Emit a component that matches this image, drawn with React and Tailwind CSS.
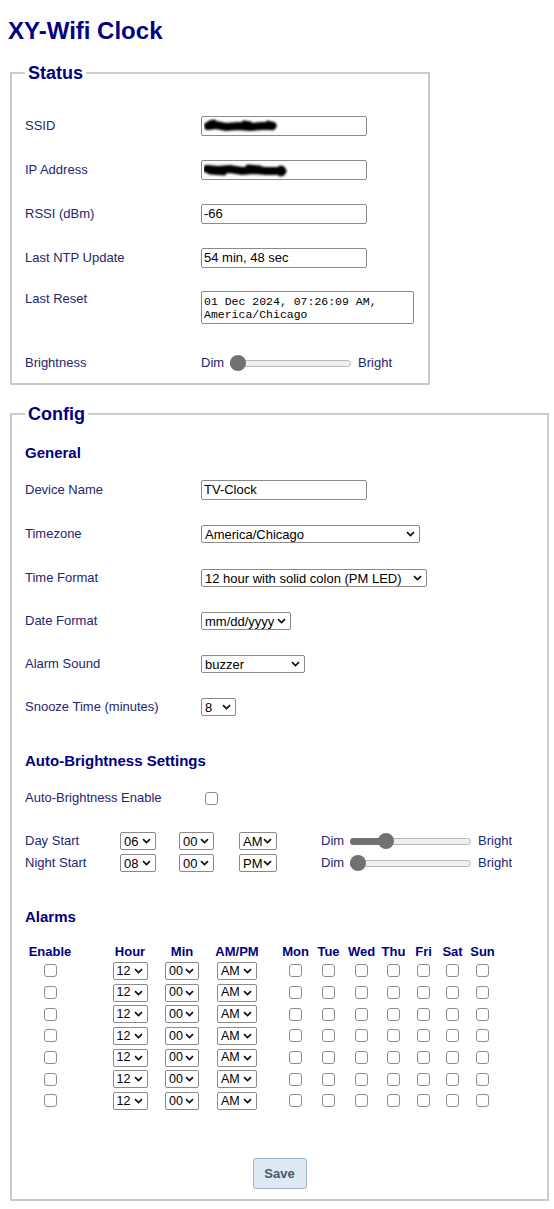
import React from "react";

const FONT = { fontFamily: '"Liberation Sans", Arial, sans-serif' };

function Chevron() {
  return (
    <svg width="9" height="6" viewBox="0 0 9 6" className="shrink-0">
      <path d="M1 1.2 L4.5 4.6 L8 1.2" fill="none" stroke="#111" strokeWidth="1.7" />
    </svg>
  );
}

function Select({ value, cls, text = "text-[13px]" }) {
  return (
    <div
      className={`flex items-center justify-between border border-[#8a8a8a] rounded-[2px] bg-white pl-[3px] pr-[4px] text-black leading-none ${cls} ${text}`}
    >
      <span className="whitespace-nowrap">{value}</span>
      <Chevron />
    </div>
  );
}

function Input({ value, cls = "w-[166px]", children }) {
  return (
    <div
      className={`flex items-center h-[20px] border border-[#8a8a8a] rounded-[2px] bg-white px-[2px] text-[13px] text-black ${cls}`}
    >
      {children || value}
    </div>
  );
}

function Check({ cls = "" }) {
  return <div className={`w-[13px] h-[13px] border border-[#8d8d8d] rounded-[3px] bg-white ${cls}`} />;
}

function Slider({ pos, cls = "w-[121px]" }) {
  const frac = pos;
  return (
    <div className={`relative h-[16px] flex items-center ${cls}`}>
      <div className="w-full h-[7px] rounded-full bg-[#efefef] border border-[#b8b8b8]" />
      <div
        className="absolute h-[7px] rounded-l-full bg-[#717171] left-0"
        style={{ width: `calc(${frac * 100}% - ${frac * 16}px + 8px)` }}
      />
      <div
        className="absolute w-[16px] h-[16px] rounded-full bg-[#717171]"
        style={{ left: `calc(${frac * 100}% - ${frac * 16}px)` }}
      />
    </div>
  );
}

function Scribble({ w, variant }) {
  return (
    <svg width={w} height="18" viewBox={`0 0 ${w} 18`} className="shrink-0">
      <defs>
        <filter id={`b${variant}`} x="-20%" y="-50%" width="140%" height="200%">
          <feGaussianBlur stdDeviation="1.1" />
        </filter>
      </defs>
      {variant === 1 ? (
        <g filter={`url(#b${variant})`} stroke="#000" strokeLinecap="round" fill="none">
          <path d="M4 9 L12 8 L22 10 L34 9 L46 10 L58 9 L66 9" strokeWidth="8" />
          <path d="M6 6 L10 5 M40 6 L46 7 M64 6 L70 8" strokeWidth="5" />
          <circle cx="68" cy="9" r="4" fill="#000" />
        </g>
      ) : (
        <g filter={`url(#b${variant})`} stroke="#000" strokeLinecap="round" fill="none">
          <path d="M3 8 L14 9 L26 8 L38 10 L50 9 L62 10 L72 10" strokeWidth="8" />
          <path d="M6 11 L20 12 M44 6 L56 7" strokeWidth="5" />
          <circle cx="77" cy="10" r="5" fill="#000" />
        </g>
      )}
    </svg>
  );
}

function Row({ label, children, cls = "" }) {
  return (
    <div className={`flex items-center h-[20px] ${cls}`}>
      <div className="w-[176px] shrink-0 text-[13px] text-[#25256f]">{label}</div>
      {children}
    </div>
  );
}

function Heading({ children, cls = "" }) {
  return <div className={`text-[15px] leading-[18px] font-bold text-[#000080] ${cls}`}>{children}</div>;
}

const cellCls = {
  enable: "w-[50px]",
  hour: "w-[44px] ml-[33px]",
  min: "w-[60px]",
  ampm: "w-[50px]",
  mon: "w-[33px] ml-[17px]",
  tue: "w-[33px]",
  wed: "w-[33px]",
  thu: "w-[31px]",
  fri: "w-[29px]",
  sat: "w-[29px]",
  sun: "w-[31px]",
};

const days = ["mon", "tue", "wed", "thu", "fri", "sat", "sun"];

function AlarmRow() {
  return (
    <div className="flex items-center h-[21.7px]">
      <div className={`${cellCls.enable} flex justify-center`}>
        <Check />
      </div>
      <div className={`${cellCls.hour} flex justify-center`}>
        <Select value="12" cls="w-[35px] h-[18px]" text="text-[12.5px]" />
      </div>
      <div className={`${cellCls.min} flex justify-center`}>
        <Select value="00" cls="w-[34px] h-[18px]" text="text-[12.5px]" />
      </div>
      <div className={`${cellCls.ampm} flex justify-center`}>
        <Select value="AM" cls="w-[40px] h-[18px]" text="text-[12.5px]" />
      </div>
      {days.map((d) => (
        <div key={d} className={`${cellCls[d]} flex justify-center`}>
          <Check />
        </div>
      ))}
    </div>
  );
}

export default function App() {
  const headers = [
    ["enable", "Enable"],
    ["hour", "Hour"],
    ["min", "Min"],
    ["ampm", "AM/PM"],
    ["mon", "Mon"],
    ["tue", "Tue"],
    ["wed", "Wed"],
    ["thu", "Thu"],
    ["fri", "Fri"],
    ["sat", "Sat"],
    ["sun", "Sun"],
  ];
  return (
    <div className="min-h-[1209px] bg-white pb-[9px]" style={FONT}>
      <h1 className="pl-[8px] pt-[17px] text-[24px] leading-[28px] font-bold text-[#000080]">XY-Wifi Clock</h1>

      <fieldset className="ml-[10px] mt-[17px] w-[420px] border-2 border-[#cbcbcb] px-[13px] pb-[10px]">
        <legend className="px-[3px] text-[18px] leading-[22px] font-bold text-[#000080]">Status</legend>
        <div className="flex flex-col pt-[32px]">
          <Row label="SSID">
            <Input>
              <Scribble w={76} variant={1} />
            </Input>
          </Row>
          <Row label="IP Address" cls="mt-[24px]">
            <Input>
              <Scribble w={86} variant={2} />
            </Input>
          </Row>
          <Row label="RSSI (dBm)" cls="mt-[24px]">
            <Input value="-66" />
          </Row>
          <Row label="Last NTP Update" cls="mt-[24px]">
            <Input value="54 min, 48 sec" />
          </Row>
          <div className="flex items-start mt-[23px]">
            <div className="w-[176px] shrink-0 text-[13px] leading-[15px] text-[#25256f]">Last Reset</div>
            <div
              className="w-[213px] h-[33px] border border-[#8a8a8a] rounded-[2px] px-[2px] pt-[3px] text-[11.5px] leading-[13px] text-black"
              style={{ fontFamily: '"Liberation Mono", "DejaVu Sans Mono", monospace' }}
            >
              01 Dec 2024, 07:26:09 AM,
              <br />
              America/Chicago
            </div>
          </div>
          <Row label="Brightness" cls="mt-[29px]">
            <span className="text-[13px] text-[#25256f]">Dim</span>
            <Slider pos={0} cls="w-[121px] ml-[6px]" />
            <span className="text-[13px] text-[#25256f] ml-[7px]">Bright</span>
          </Row>
        </div>
      </fieldset>

      <fieldset className="ml-[10px] mt-[18px] w-[539px] border-2 border-[#cbcbcb] px-[13px] pb-[10px]">
        <legend className="px-[3px] text-[18px] leading-[22px] font-bold text-[#000080]">Config</legend>
        <div className="flex flex-col pt-[19px]">
          <Heading>General</Heading>
          <Row label="Device Name" cls="mt-[18px]">
            <Input value="TV-Clock" />
          </Row>
          <Row label="Timezone" cls="mt-[24px]">
            <Select value="America/Chicago" cls="w-[219px] h-[18px]" />
          </Row>
          <Row label="Time Format" cls="mt-[24px]">
            <Select value="12 hour with solid colon (PM LED)" cls="w-[226px] h-[18px]" />
          </Row>
          <Row label="Date Format" cls="mt-[23px]">
            <Select value="mm/dd/yyyy" cls="w-[90px] h-[18px]" />
          </Row>
          <Row label="Alarm Sound" cls="mt-[23px]">
            <Select value="buzzer" cls="w-[104px] h-[18px]" />
          </Row>
          <Row label="Snooze Time (minutes)" cls="mt-[23px]">
            <Select value="8" cls="w-[35px] h-[18px]" />
          </Row>

          <Heading cls="mt-[35px]">Auto-Brightness Settings</Heading>
          <Row label="Auto-Brightness Enable" cls="mt-[18px]">
            <Check cls="ml-[4px]" />
          </Row>

          <div className="flex items-center h-[20px] mt-[23px]">
            <div className="w-[95px] shrink-0 text-[13px] text-[#25256f]">Day Start</div>
            <Select value="06" cls="w-[36px] h-[18px]" />
            <Select value="00" cls="w-[35px] h-[18px] ml-[23px]" />
            <Select value="AM" cls="w-[38px] h-[18px] ml-[25px]" />
            <span className="text-[13px] text-[#25256f] ml-[44px]">Dim</span>
            <Slider pos={0.27} cls="w-[121px] ml-[6px]" />
            <span className="text-[13px] text-[#25256f] ml-[7px]">Bright</span>
          </div>
          <div className="flex items-center h-[20px] mt-[2px]">
            <div className="w-[95px] shrink-0 text-[13px] text-[#25256f]">Night Start</div>
            <Select value="08" cls="w-[36px] h-[18px]" />
            <Select value="00" cls="w-[35px] h-[18px] ml-[23px]" />
            <Select value="PM" cls="w-[38px] h-[18px] ml-[25px]" />
            <span className="text-[13px] text-[#25256f] ml-[44px]">Dim</span>
            <Slider pos={0} cls="w-[121px] ml-[6px]" />
            <span className="text-[13px] text-[#25256f] ml-[7px]">Bright</span>
          </div>

          <Heading cls="mt-[35px]">Alarms</Heading>
          <div className="flex items-center h-[16px] mt-[18px]">
            {headers.map(([k, t]) => (
              <div key={k} className={`${cellCls[k]} text-center text-[13px] leading-[16px] font-bold text-[#000080]`}>
                {t}
              </div>
            ))}
          </div>
          {[0, 1, 2, 3, 4, 5, 6].map((i) => (
            <AlarmRow key={i} />
          ))}

          <div className="mt-[46px] flex justify-center">
            <button className="w-[54px] h-[31px] rounded-[3px] border border-[#9fb4c8] bg-[#dfe9f3] text-[13px] font-bold text-[#46586b]">
              Save
            </button>
          </div>
        </div>
      </fieldset>
    </div>
  );
}
